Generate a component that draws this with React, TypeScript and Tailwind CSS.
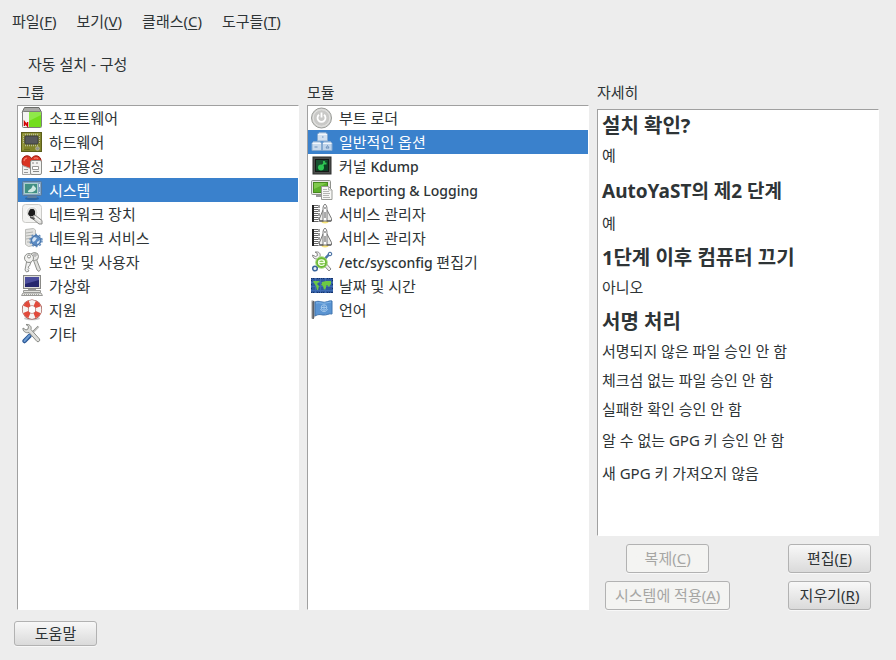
import React, { useState } from "react";

type Entry = { label: string; icon: React.ReactNode };

function Icon({ children }: { children: React.ReactNode }) {
  return (
    <svg viewBox="0 0 22 22" className="size-[22px] shrink-0" aria-hidden="true">
      {children}
    </svg>
  );
}

const softwareIcon = (
  <Icon>
    <path d="M3.500.5h14.500l2.500 5H1z" fill="#a9a9a6" stroke="#6a6c68" />
    <rect x="1.500" y="4.500" width="19" height="16" rx="1" fill="#f4f4f2" stroke="#7d7f7a" />
    <rect x="8" y="5" width="12" height="15" fill="#73dd1c" />
    <path d="M8 5h12v3L8 14z" fill="#8fe84a" />
    <path d="M3.500 19v-4l3 4v-4" fill="none" stroke="#d40000" strokeWidth="1.500" />
  </Icon>
);

const hardwareIcon = (
  <Icon>
    <rect x=".5" y="1.500" width="20" height="19" fill="#80842a" stroke="#5b5e1c" />
    <path d="M2 19V3h17" fill="none" stroke="#a0a446" />
    <rect x="4" y="5" width="13" height="8" rx="1" fill="#57595b" stroke="#3c3e40" />
    <path d="M4 3.500h14M4 14.500h14" stroke="#b9bb9a" strokeWidth="1.500" strokeDasharray="1 1" />
    <path d="M2.500 5v8M18.500 5v8" stroke="#b9bb9a" strokeDasharray="1 1" />
    <circle cx="16.500" cy="17.500" r="1.800" fill="#8f9190" stroke="#b5b78c" />
    <path d="M3 18.500h6" stroke="#6d7022" />
  </Icon>
);

const heartIcon = (
  <Icon>
    <path d="M10.500 19C5 14.500 1 11 1 6.500 1 3 3.200 .8 6 .8c2 0 3.600 1 4.500 2.700 1-1.700 2.600-2.700 4.600-2.700 2.800 0 5 2.200 5 5.500 0 4.700-4 8.200-9.600 12.700z" fill="#d93322" stroke="#9c1a10" />
    <path d="M3 6c.4-1.700 1.600-2.800 3-2.800M13 3.500c1-.8 3-.8 4 .2" fill="none" stroke="#f47a68" strokeWidth="1.300" />
    <path d="M1.500 19.500v-9l8 3v6z" fill="#f1f1f0" stroke="#a5a5a3" />
    <path d="M3 14.500h4M3 17.500h4" stroke="#999" />
    <rect x="9.500" y="5.500" width="11" height="14" rx="1.500" fill="#f3f3f1" stroke="#8d8f8b" />
    <path d="M11 8h2M15 8h2M12 16.500h6" stroke="#8a8a88" />
    <path d="M11.500 11.500h6v3h-6z" fill="#fff" stroke="#9a9a98" />
  </Icon>
);

const systemIcon = (
  <Icon>
    <ellipse cx="11" cy="19.500" rx="7" ry="1.800" fill="#1f3f63" opacity=".4" />
    <path d="M7 16h8l1 3H6z" fill="#5f7f9f" />
    <rect x="1.500" y="2.500" width="19" height="14" rx="1" fill="#84a5c4" stroke="#54779b" />
    <rect x="3.500" y="4.500" width="13" height="10" fill="#418f83" stroke="#a9cfc9" />
    <path d="M7 13c0-3 3-2 4-5l1-2 3 3c0 3-3 5-8 4z" fill="#cfe8e2" />
    <path d="M18.500 5v3M18.500 13v1" stroke="#dce8f2" />
  </Icon>
);

const networkDeviceIcon = (
  <Icon>
    <rect x="1.500" y="1.500" width="19" height="18" rx="3" fill="#f3f3f1" stroke="#cbcbc8" />
    <circle cx="11" cy="9.500" r="6" fill="#dcdcd9" stroke="#fff" />
    <path d="M8 8l1.500-2h3L14 8v4l-2 1H8.500L7 11z" fill="#1c1c1c" />
    <path d="M12 13l2-1 7 5.500V21h-3l-6-5z" fill="#e2e2df" stroke="#8a8a88" />
    <path d="M14 14l5 4" stroke="#fff" />
    <path d="M9 13l5 2-1 2-4-2z" fill="#555" />
  </Icon>
);

const networkServiceIcon = (
  <Icon>
    <path d="M4.500 2.500l8-1 2 1.500v15l-7 1.500-3-2z" fill="#e2e2e0" stroke="#bbbcb9" />
    <path d="M5 6l7-1M5 9l7-1M5 12l6-1M6 15h5" stroke="#b2b4b0" />
    <circle cx="15" cy="13.500" r="5" fill="#5c8cc4" stroke="#3d6aa2" />
    <circle cx="15" cy="13.500" r="6" fill="none" stroke="#6590c0" strokeWidth="1.500" strokeDasharray="2 1.800" />
    <path d="M11 13l2-3 3 1-2 3-2 1zM16 15l3-2-1 3-2 1z" fill="#d3e4f6" />
  </Icon>
);

const keysIcon = (
  <Icon>
    <path d="M12 8l4 11 2 1.500 1.500-2-4-10" fill="#e0e0dd" stroke="#8f918d" />
    <circle cx="13.500" cy="5.500" r="4" fill="#e8e8e6" stroke="#8f918d" />
    <circle cx="14" cy="4" r="1.200" fill="#fff" stroke="#999" />
    <path d="M5.500 11L4 19l1.500 2L8 20l-1-1.500 1-1-1-1.500 1.500-1L10 11z" fill="#eee" stroke="#8f918d" />
    <circle cx="8" cy="7" r="4.500" fill="#f2f2f0" stroke="#8f918d" />
    <circle cx="8" cy="5.500" r="1.500" fill="#fff" stroke="#8f918d" />
  </Icon>
);

const computerIcon = (
  <Icon>
    <rect x="2.500" y=".5" width="17" height="13" fill="#deded9" stroke="#8a8a87" />
    <rect x="4" y="2" width="14" height="10" fill="#25266d" />
    <path d="M4 2h14v3L4 9z" fill="#4b4d9c" />
    <path d="M7 14h8v1H7z" fill="#999" />
    <path d="M2.500 15.500h17v2h-17z" fill="#e3e3df" stroke="#9a9a97" />
    <path d="M2 18h18l1.500 2.500H.5z" fill="#ecece8" stroke="#9a9a97" />
    <path d="M3 19.500h16" stroke="#a5a5a2" strokeDasharray="1 1" />
  </Icon>
);

const supportIcon = (
  <Icon>
    <ellipse cx="11" cy="19.500" rx="8" ry="1.800" fill="#c9c9c9" />
    <circle cx="11" cy="10.500" r="6.800" fill="none" stroke="#9b4a43" strokeWidth="6.600" />
    <circle cx="11" cy="10.500" r="6.800" fill="none" stroke="#f5f5f3" strokeWidth="5.400" />
    <circle cx="11" cy="10.500" r="6.800" fill="none" stroke="#e24a3b" strokeWidth="5.400" strokeDasharray="5.340 5.340" strokeDashoffset="-2.670" />
  </Icon>
);

const toolsIcon = (
  <Icon>
    <path d="M17.500 3.500L9 12" stroke="#888a85" strokeWidth="2" />
    <path d="M18 3.500L9.500 12" stroke="#eee" />
    <path d="M8.500 13L3.500 18" stroke="#2a5795" strokeWidth="4.500" strokeLinecap="round" />
    <path d="M8.500 12.500L3.500 18" stroke="#6c9bd2" strokeWidth="2" strokeLinecap="round" />
    <path d="M2 5l3 2 2-1 .5-2.500L5 1.500c3-.5 6 1.500 5 5L18.500 16c1 1.500-1 3.500-2.500 2.500L8 9.500C4.500 10.500 1.500 8 2 5z" fill="#dededb" stroke="#888a85" />
  </Icon>
);

const powerIcon = (
  <Icon>
    <circle cx="10.500" cy="11" r="10" fill="#d2d2d0" stroke="#9b9d99" />
    <circle cx="10.500" cy="11" r="8.300" fill="#c9c9c7" stroke="#e4e4e2" />
    <path d="M8 7.800a4 4 0 1 0 5 0M10.500 5.500v5" fill="none" stroke="#fff" strokeWidth="1.800" />
  </Icon>
);

const cubesIcon = (
  <Icon>
    <path d="M6.500 3l2-1.500h6L16.500 3v7h-10z" fill="#d3e1f0" stroke="#84a9d0" />
    <path d="M1 12l1.500-1.500H9l1.500 1.500v7.500H1z" fill="#c9daec" stroke="#84a9d0" />
    <path d="M11.500 12l1.500-1.500h6.500L21 12v7.500h-9.500z" fill="#bfd4ea" stroke="#84a9d0" />
    <path d="M7 3.500h9M1.500 12.500h8.500M12 12.500h8.500" stroke="#f2f7fc" />
    <path d="M11 6h1.500M3.500 16h3M15 17l1.500-2.500L18 17z" stroke="#6f93bd" fill="none" />
  </Icon>
);

const kdumpIcon = (
  <Icon>
    <rect x="2" y="2" width="18" height="17" fill="#4b4d4b" stroke="#2d2f2d" />
    <rect x="4.500" y="4.500" width="13" height="12" fill="#0c4124" stroke="#161816" />
    <path d="M5 5h12L5 15z" fill="#175130" />
    <circle cx="10" cy="12.500" r="3" fill="#2fc653" />
    <path d="M10.500 11.500l3-3.500M13 6v2.500h2.500" stroke="#2fc653" strokeWidth="1.800" fill="none" />
  </Icon>
);

const reportIcon = (
  <Icon>
    <path d="M5 16h6v2H5z" fill="#999" />
    <rect x=".5" y="1.500" width="19" height="14" rx="1" fill="#e6e6e3" stroke="#8f918c" />
    <rect x="2.500" y="3.500" width="14" height="10" fill="#5cb02c" stroke="#47871f" />
    <path d="M3 4h13L3 10z" fill="#7fc94c" />
    <path d="M10.500 7.500h7l3.500 3.500v9.500H10.500z" fill="#f8f8f6" stroke="#999b96" />
    <path d="M17.500 7.500V11H21M12 10.500h4M12 12.500h6M12 14.500h7M12 16.500h6M12 18.500h7" stroke="#b5b5b3" fill="none" />
  </Icon>
);

const shuttleIcon = (
  <Icon>
    <path d="M2 2v17" stroke="#222" strokeWidth="2" />
    <path d="M4 2v17M6 2v17" stroke="#333" strokeWidth="1.500" strokeDasharray="1 1" />
    <path d="M8 2v17" stroke="#444" strokeDasharray="3 1" />
    <ellipse cx="14" cy="18.800" rx="3.500" ry="1.600" fill="#f6e27a" />
    <path d="M12 7l-3.500 8.500V18H13M16 7l4.500 8.500V18H15" fill="#ededeb" stroke="#777" />
    <path d="M12 18V5.500c0-2 .8-3.500 2-4.500 1.200 1 2 2.500 2 4.500V18z" fill="#fff" stroke="#777" />
    <path d="M13 5h2M14 9v6" stroke="#555" />
    <path d="M9 18h3M16 18h4" stroke="#444" />
  </Icon>
);

const sysconfigIcon = (
  <Icon>
    <path d="M18 3.500L5 17" stroke="#4c76a8" strokeWidth="2.500" strokeLinecap="round" />
    <circle cx="4" cy="17.500" r="2.300" fill="#eaf0f7" stroke="#3a659c" strokeWidth="1.500" />
    <circle cx="19" cy="3" r="1.800" fill="#eaf0f7" stroke="#3a659c" />
    <path d="M1.500 4l3 1.500 2-1L6 2l-2-.8C7.500 0 10 2.500 9 5.500L20 18l-2 2L7 8C4 8.500 1.500 7 1.500 4z" fill="#eee" stroke="#8a8a88" />
    <circle cx="10.500" cy="11.500" r="5.800" fill="#6cba35" stroke="#a9d982" />
    <path d="M7.500 11.500h6c0-3.500-6-3.500-6 0s4 3.500 6 1.800" fill="none" stroke="#f3ffe6" strokeWidth="1.300" />
  </Icon>
);

const timezoneIcon = (
  <Icon>
    <rect x="0" y="3" width="22" height="15" fill="#2f5aa0" />
    <path d="M0 3.500h22M0 17.500h22" stroke="#15336b" strokeDasharray="1 1" />
    <path d="M.5 3v15M21.500 3v15" stroke="#15336b" strokeDasharray="1 1" />
    <path d="M0 7.500h22M0 11.500h22M0 15.500h22M4.500 3v15M9.500 3v15M14.500 3v15" stroke="#3f6cb2" />
    <path d="M2 6h7L7 8 6 9l2 2-1 4H6l-1-4-2-3zM11 7l4-1h5v3l-2 3-2-2-1 1v2l-2 2-1-4-2-1 1-2z" fill="#6cc944" />
  </Icon>
);

const flagIcon = (
  <Icon>
    <path d="M1.500 1.500v18" stroke="#999" strokeWidth="2" />
    <path d="M3 2v16l-1 2V3z" stroke="#5d6166" fill="#5d6166" />
    <path d="M4 3c4-2 7 1 11 0 2-.5 4-1.500 6-1v13c-3-1-5 1.500-9 1-3-.5-5-1-8 1z" fill="#5a94d2" stroke="#3f74b0" />
    <path d="M5 4c4-1 6 1 10 0l5-1" fill="none" stroke="#82b6e8" />
    <circle cx="13" cy="8.500" r="2.800" fill="none" stroke="#9dc4ea" />
    <path d="M10 8.500h6M13 6v5M9.500 10c1 3.500 6 3.500 7 0" fill="none" stroke="#9dc4ea" />
  </Icon>
);

const groups: Entry[] = [
  { label: "소프트웨어", icon: softwareIcon },
  { label: "하드웨어", icon: hardwareIcon },
  { label: "고가용성", icon: heartIcon },
  { label: "시스템", icon: systemIcon },
  { label: "네트워크 장치", icon: networkDeviceIcon },
  { label: "네트워크 서비스", icon: networkServiceIcon },
  { label: "보안 및 사용자", icon: keysIcon },
  { label: "가상화", icon: computerIcon },
  { label: "지원", icon: supportIcon },
  { label: "기타", icon: toolsIcon },
];

const modules: Entry[] = [
  { label: "부트 로더", icon: powerIcon },
  { label: "일반적인 옵션", icon: cubesIcon },
  { label: "커널 Kdump", icon: kdumpIcon },
  { label: "Reporting & Logging", icon: reportIcon },
  { label: "서비스 관리자", icon: shuttleIcon },
  { label: "서비스 관리자", icon: shuttleIcon },
  { label: "/etc/sysconfig 편집기", icon: sysconfigIcon },
  { label: "날짜 및 시간", icon: timezoneIcon },
  { label: "언어", icon: flagIcon },
];

const details = [
  { title: "설치 확인?", lines: ["예"] },
  { title: "AutoYaST의 제2 단계", lines: ["예"] },
  { title: "1단계 이후 컴퓨터 끄기", lines: ["아니오"] },
  {
    title: "서명 처리",
    lines: [
      "서명되지 않은 파일 승인 안 함",
      "체크섬 없는 파일 승인 안 함",
      "실패한 확인 승인 안 함",
      "알 수 없는 GPG 키 승인 안 함",
      "새 GPG 키 가져오지 않음",
    ],
  },
];

const menus = [
  ["파일", "F"],
  ["보기", "V"],
  ["클래스", "C"],
  ["도구들", "T"],
];

const hasLatin = (text: string) => /[A-Za-z]/.test(text);

/* Latin runs are set a step smaller and heavier than the Hangul around them. */
function MixedText({ text }: { text: string }) {
  return (
    <span className="whitespace-pre">
      {text.split(/([A-Za-z/&][A-Za-z/& ]*)/).map((run, i) =>
        hasLatin(run) ? (
          <span key={i} className="text-sm font-medium">
            {run}
          </span>
        ) : (
          run
        ),
      )}
    </span>
  );
}

function Mnemonic({ text, letter }: { text: string; letter: string }) {
  return (
    <>
      {text}(<span className="underline underline-offset-2">{letter}</span>)
    </>
  );
}

function ListPane({ title, entries, initial }: { title: string; entries: Entry[]; initial: number }) {
  const [selected, setSelected] = useState(initial);
  return (
    <section className="flex min-w-0 flex-1 flex-col">
      <h2 className="h-6 leading-[22px]">{title}</h2>
      <ul className="flex-1 border border-r-white border-b-white border-t-[#a0a0a0] border-l-[#a0a0a0] bg-white">
        {entries.map((entry, i) => (
          <li key={i}>
            <button
              type="button"
              aria-pressed={i === selected}
              onClick={() => setSelected(i)}
              className={
                i === selected
                  ? "flex h-6 w-full items-center gap-1.5 bg-[#3a81cc] pl-[3px] text-left text-white"
                  : "flex h-6 w-full items-center gap-1.5 pl-[3px] text-left"
              }
            >
              {entry.icon}
              <MixedText text={entry.label} />
            </button>
          </li>
        ))}
      </ul>
    </section>
  );
}

function ActionButton({ children, disabled }: { children: React.ReactNode; disabled?: boolean }) {
  return (
    <button
      type="button"
      disabled={disabled}
      className="h-[29px] min-w-[83px] rounded-[3px] border border-[#b2b2b2] bg-linear-to-b from-[#f8f8f8] to-[#dadada] px-[9px] pb-0.5 whitespace-nowrap shadow-[0_1px_0_#f8f8f8] disabled:from-[#f4f4f2] disabled:to-[#f4f4f2] disabled:text-[#a6a6a4]"
    >
      {children}
    </button>
  );
}

export default function App() {
  return (
    <div className="flex min-h-screen flex-col bg-[#ededed] font-['Noto_Sans','Noto_Sans_CJK_KR',sans-serif] text-[15px] leading-6 text-[#2e3436]">
      <nav className="flex h-[42px] items-center gap-5 px-3">
        {menus.map(([text, letter]) => (
          <button key={letter} type="button">
            <Mnemonic text={text} letter={letter} />
          </button>
        ))}
      </nav>
      <h1 className="mt-2.5 px-7">자동 설치 - 구성</h1>
      <main className="mt-[5px] flex flex-1 gap-2 px-[17px]">
        <ListPane title="그룹" entries={groups} initial={3} />
        <ListPane title="모듈" entries={modules} initial={1} />
        <section className="flex min-w-0 flex-1 flex-col">
          <h2 className="h-7 leading-[22px]">자세히</h2>
          <div className="flex flex-1 flex-col gap-1 border border-r-white border-b-white border-t-[#a0a0a0] border-l-[#a0a0a0] bg-white px-1">
            {details.map((section) => (
              <div key={section.title}>
                <h3
                  className={
                    hasLatin(section.title)
                      ? "text-[19px] leading-[35px] font-bold"
                      : "text-[20px] leading-[31px] font-bold"
                  }
                >
                  {section.title}
                </h3>
                {section.lines.map((line) => (
                  <p key={line} className={hasLatin(line) ? "leading-[33px]" : "leading-[29px]"}>
                    {line}
                  </p>
                ))}
              </div>
            ))}
          </div>
          <div className="flex justify-between px-2 pt-2">
            <div className="flex flex-col items-center gap-2">
              <ActionButton disabled>
                <Mnemonic text="복제" letter="C" />
              </ActionButton>
              <ActionButton disabled>
                <Mnemonic text="시스템에 적용" letter="A" />
              </ActionButton>
            </div>
            <div className="flex flex-col gap-2">
              <ActionButton>
                <Mnemonic text="편집" letter="E" />
              </ActionButton>
              <ActionButton>
                <Mnemonic text="지우기" letter="R" />
              </ActionButton>
            </div>
          </div>
        </section>
      </main>
      <footer className="px-3.5 pt-[11px] pb-3.5">
        <button
          type="button"
          className="block h-[25px] w-[83px] rounded-[3px] border border-[#b2b2b2] bg-linear-to-b from-[#f8f8f8] to-[#dadada] leading-[23px] shadow-[0_1px_0_#f8f8f8]"
        >
          도움말
        </button>
      </footer>
    </div>
  );
}
